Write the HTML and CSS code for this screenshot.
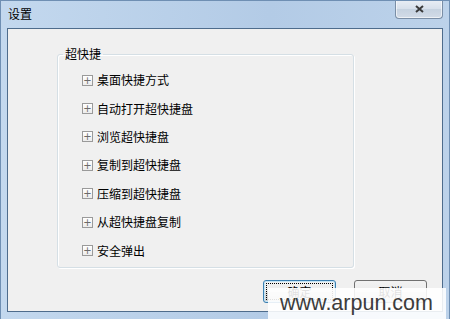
FILE: index.html
```html
<!DOCTYPE html>
<html lang="zh-CN">
<head>
    <meta charset="UTF-8">
    <meta name="viewport" content="width=device-width, initial-scale=1.0">
    <title>设置</title>
    <link rel="stylesheet" href="styles.css">
</head>
<body>
    <div class="window">
        <div class="titlebar">
            <span class="title">设置</span>
            <button class="close-btn" aria-label="关闭">
                <svg width="9" height="8" viewBox="0 0 9 8">
                    <path d="M1 1 L8 7 M8 1 L1 7" stroke="#3a3a3a" stroke-width="2" fill="none"/>
                </svg>
            </button>
        </div>

        <div class="client">
            <fieldset class="group">
                <legend>超快捷</legend>
                <ul class="tree">
                    <li><span class="expander">+</span>桌面快捷方式</li>
                    <li><span class="expander">+</span>自动打开超快捷盘</li>
                    <li><span class="expander">+</span>浏览超快捷盘</li>
                    <li><span class="expander">+</span>复制到超快捷盘</li>
                    <li><span class="expander">+</span>压缩到超快捷盘</li>
                    <li><span class="expander">+</span>从超快捷盘复制</li>
                    <li><span class="expander">+</span>安全弹出</li>
                </ul>
            </fieldset>

            <div class="buttons">
                <button class="btn btn-default"><span class="focus">确定</span></button>
                <button class="btn">取消</button>
            </div>
        </div>

        <div class="watermark">www.arpun.com</div>
    </div>
</body>
</html>
```

FILE: styles.css
```css
* {
    box-sizing: border-box;
}
html, body {
    margin: 0;
    padding: 0;
}
body {
    font-family: "Noto Sans CJK SC", "DejaVu Sans", sans-serif;
    font-size: 12px;
    color: #000;
}
.window {
    position: relative;
    width: 450px;
    height: 319px;
    display: flex;
    flex-direction: column;
    background: linear-gradient(to right, #c3d8ee, #b3cbe6 60%, #bcd2ea);
    border: 1px solid #6f8fb3;
    border-bottom: none;
    overflow: hidden;
}
.titlebar {
    height: 27px;
    display: flex;
    justify-content: space-between;
    align-items: flex-start;
}
.title {
    padding: 5px 0 0 7px;
    line-height: 16px;
    font-size: 12px;
}
.close-btn {
    width: 48px;
    height: 19px;
    margin-right: 6px;
    margin-top: -1px;
    padding: 0;
    border: 1px solid #7a8ea6;
    border-top: none;
    border-radius: 0 0 4px 4px;
    background: linear-gradient(#e9eef5, #d7e0eb 50%, #c6d2e0 51%, #d2dbe7);
    box-shadow: inset 0 0 0 1px rgba(255, 255, 255, 0.6);
    display: flex;
    align-items: center;
    justify-content: center;
}
.client {
    flex: 1;
    margin: 0 6px 7px 6px;
    border: 1px solid #4e6c8c;
    background: #f0f0f0;
    padding: 17px 0 0 49px;
    display: flex;
    flex-direction: column;
}
.group {
    width: 297px;
    height: 222px;
    margin: 0;
    padding: 0 0 0 5px;
    border: 1px solid #d5dfe5;
    border-radius: 3px;
    box-shadow: inset 1px 1px 0 #fff, 1px 1px 0 #fff;
}
.group legend {
    padding: 0 2px;
    line-height: 16px;
}
.tree {
    list-style: none;
    margin: 0;
    padding: 4px 0 0 19px;
}
.tree li {
    height: 28.4px;
    display: flex;
    align-items: center;
    line-height: 14px;
}
.expander {
    width: 11px;
    height: 11px;
    margin-right: 4px;
    border: 1px solid #9a9a9a;
    background: linear-gradient(#fff, #ececec);
    color: #6a6a6a;
    font-family: "DejaVu Sans", sans-serif;
    font-size: 10px;
    line-height: 9px;
    text-align: center;
}
.buttons {
    display: flex;
    justify-content: flex-end;
    gap: 18px;
    padding: 12px 15px 0 0;
}
.btn {
    width: 73px;
    height: 23px;
    padding: 2px;
    border: 1px solid #707070;
    border-radius: 3px;
    background: linear-gradient(#f2f2f2, #ebebeb 50%, #dddddd 51%, #cfcfcf);
    font-family: "Noto Sans CJK SC", sans-serif;
    font-size: 12px;
    color: #000;
}
.btn-default {
    border-color: #3c7fb1;
    box-shadow: inset 0 0 0 1px #c4e5f6;
}
.focus {
    display: flex;
    align-items: center;
    justify-content: center;
    height: 100%;
    border: 1px dotted #000;
}
.watermark {
    position: absolute;
    left: 267px;
    top: 287px;
    width: 178px;
    height: 32px;
    background: rgba(255, 255, 255, 0.88);
    font-family: "Liberation Sans", Arial, sans-serif;
    font-size: 21.5px;
    color: #3c3c3c;
    padding: 2px 0 0 12px;
    line-height: 26px;
}
```
